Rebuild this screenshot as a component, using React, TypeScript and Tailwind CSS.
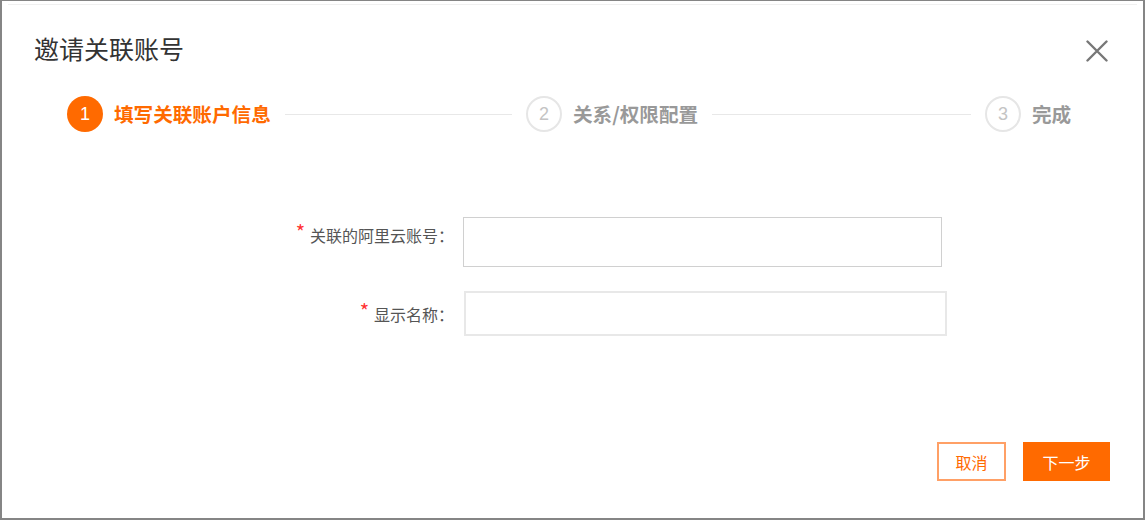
import React from "react";

const font = "font-['Noto_Sans_CJK_SC','Noto_Sans',sans-serif]";

function Step({
  n,
  label,
  active,
  last,
}: {
  n: number;
  label: string;
  active?: boolean;
  last?: boolean;
}) {
  return (
    <div className={`flex items-center ${last ? "" : "w-[459px]"}`}>
      {active ? (
        <div className="w-[36px] h-[36px] rounded-full bg-[#ff6a00] flex items-center justify-center text-white text-[18px] leading-none font-['Liberation_Sans',sans-serif]">
          {n}
        </div>
      ) : (
        <div className="w-[36px] h-[36px] rounded-full border-2 border-[#e6e6e6] flex items-center justify-center text-[#c4c4c4] text-[18px] leading-none font-['Liberation_Sans',sans-serif]">
          {n}
        </div>
      )}
      <div
        className={`ml-[11px] text-[19.6px] leading-[26px] font-bold whitespace-nowrap ${
          active ? "text-[#ff6a00]" : "text-[#999999]"
        }`}
      >
        {label}
      </div>
      {!last && <div className="flex-1 h-px bg-[#e8e8e8] ml-[14px] mr-[14px]" />}
    </div>
  );
}

export default function App() {
  return (
    <div
      className={`w-[1145px] h-[520px] bg-white border-[#858585] border-t border-l-2 border-r-2 border-b-2 flex flex-col ${font}`}
    >
      <div className="mt-[3px] h-px bg-[#f0f0f0] mx-[6px]" />
      <div className="mt-[30px] flex items-start justify-between pl-[32px] pr-[35px]">
        <div className="text-[25px] leading-[26px] text-[#333333]">邀请关联账号</div>
        <svg width="22" height="22" viewBox="0 0 22 22" className="mt-[5px]">
          <path d="M1.5 1.5 L20.5 20.5 M20.5 1.5 L1.5 20.5" stroke="#777777" strokeWidth="2.4" strokeLinecap="round" />
        </svg>
      </div>
      <div className="mt-[34px] pl-[65px] flex items-center">
        <Step n={1} label="填写关联账户信息" active />
        <Step n={2} label="关系/权限配置" />
        <Step n={3} label="完成" last />
      </div>
      <div className="mt-[85px] flex flex-col">
        <div className="flex items-start">
          <div className="w-[452px] pt-[6px] text-right text-[16px] leading-[22px] text-[#555555] whitespace-nowrap">
            <span className="text-[#ff3333] text-[20px] mr-[5px] relative top-[-2px]">*</span>
            关联的阿里云账号：
          </div>
          <div className="ml-[9px] w-[479px] h-[50px] border border-[#d0d0d0]" />
        </div>
        <div className="mt-[24px] flex items-center">
          <div className="w-[452px] text-right text-[16px] leading-[22px] text-[#555555] whitespace-nowrap">
            <span className="text-[#ff3333] text-[20px] mr-[5px] relative top-[-2px]">*</span>
            显示名称：
          </div>
          <div className="ml-[10px] w-[483px] h-[45px] border-2 border-[#e8e8e8]" />
        </div>
      </div>
      <div className="mt-[106px] flex justify-end pr-[33px] gap-[17px]">
        <button className="w-[69px] h-[39px] border-2 border-[#ffa066] text-[#ff6a00] text-[16px] bg-white">
          取消
        </button>
        <button className="w-[87px] h-[39px] bg-[#ff6a00] text-white text-[16px]">下一步</button>
      </div>
    </div>
  );
}
